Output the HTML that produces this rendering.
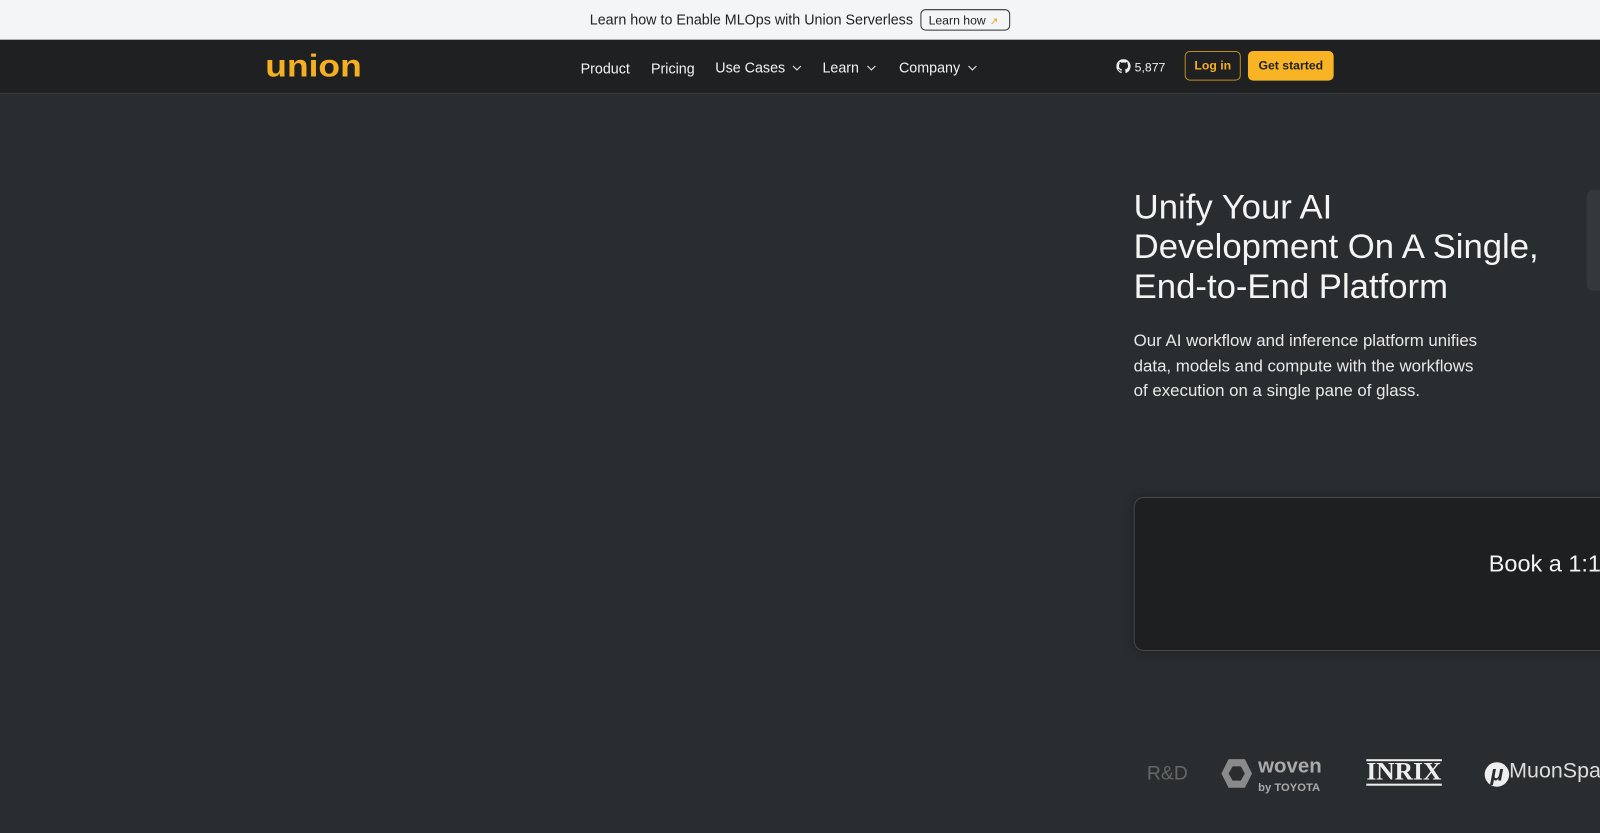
<!DOCTYPE html>
<html><head><meta charset="utf-8"><style>
*{margin:0;padding:0;box-sizing:border-box}
html,body{width:1600px;height:833px;overflow:hidden;background:#2a2d2f}
body{font-family:"Liberation Sans",sans-serif;position:relative}
#w{position:absolute;left:0;top:0;width:1568px;height:816px;transform:scale(1.0204);transform-origin:0 0}
.banner{position:absolute;left:0;top:0;width:1600px;height:39px;background:#f4f5f7;color:#222;font-size:14px}
.banner .t{position:absolute;left:578px;top:11px}
.banner .b{position:absolute;left:902px;top:9px;width:88px;height:21px;border:1px solid #333;border-radius:5px;font-size:12px;padding:3px 0 0 7px}
.banner .b span{color:#e5a50a;font-size:10px;margin-left:4px}
.nav{position:absolute;left:0;top:39px;width:1600px;height:53px;background:#1f2021;border-bottom:1px solid #3a3d40}
.logo{position:absolute;left:260px;top:8px;color:#f5b021;font-weight:bold;font-size:31px;letter-spacing:0;transform:scaleX(1.12);transform-origin:0 0}
.nav a{position:absolute;top:19px;color:#f2f2f2;font-size:14px}
.nav .ch{display:inline-block;width:6px;height:6px;border-right:1.5px solid #eee;border-bottom:1.5px solid #eee;transform:rotate(45deg);margin-left:9px;position:relative;top:-3px}
.gh{position:absolute;left:1094px;top:19px;color:#eee;font-size:12px}
.login{position:absolute;left:1161px;top:11px;width:55px;height:29px;border:1px solid #c28a20;border-radius:5px;color:#f5b021;font-size:12px;font-weight:bold;text-align:center;line-height:27px}
.gs{position:absolute;left:1223px;top:11px;width:84px;height:29px;background:#f8b425;border-radius:5px;color:#1f2021;font-size:12px;font-weight:bold;text-align:center;line-height:29px}
h1{position:absolute;left:1111px;top:184px;color:#f4f4f4;font-weight:normal;font-size:34px;line-height:39px;white-space:nowrap}
p.d{position:absolute;left:1111px;top:322px;color:#e8e8e8;font-size:16.5px;line-height:24.5px;width:348px}
.card{position:absolute;left:1111px;top:487px;width:520px;height:151px;background:#1e1f21;border:1px solid #45484b;border-radius:10px;box-shadow:0 0 10px rgba(0,0,0,.3)}
.card span{position:absolute;left:347px;top:51px;color:#f2f2f2;font-size:23px}
.side{position:absolute;left:1555px;top:186px;width:60px;height:99px;background:#34373b;border-radius:6px}
.logos{position:absolute;top:748px;color:#bbb;white-space:nowrap}
</style></head><body><div id="w">
<div class="banner"><span class="t">Learn how to Enable MLOps with Union Serverless</span><div class="b">Learn how<span>↗</span></div></div>
<div class="nav">
<div class="logo">union</div>
<a style="left:569px;top:20px">Product</a>
<a style="left:638px;top:20px">Pricing</a>
<a style="left:701px">Use Cases<i class="ch"></i></a>
<a style="left:806px">Learn<i class="ch"></i></a>
<a style="left:881px">Company<i class="ch"></i></a>
<div class="gh"><svg width="14" height="14" viewBox="0 0 16 16" style="vertical-align:-2px;margin-right:4px"><path fill="#eee" d="M8 0a8 8 0 0 0-2.5 15.6c.4 0 .5-.2.5-.4v-1.5c-2.200.5-2.7-1-2.7-1-.4-.9-.9-1.2-.9-1.2-.7-.5.1-.5.1-.5.8.1 1.2.8 1.2.8.7 1.3 1.9.9 2.4.7 0-.5.3-.9.5-1.1-1.8-.2-3.6-.9-3.6-4 0-.9.3-1.6.8-2.1-.1-.2-.4-1 .1-2.1 0 0 .7-.2 2.2.8a7.4 7.4 0 0 1 4 0c1.5-1 2.2-.8 2.2-.8.4 1.1.2 1.9.1 2.1.5.6.8 1.3.8 2.1 0 3.1-1.900 3.8-3.600 4 .3.3.6.8.6 1.5v2.2c0 .2.1.5.6.4A8 8 0 0 0 8 0z"/></svg>5,877</div>
<div class="login">Log in</div>
<div class="gs">Get started</div>
</div>
<h1>Unify Your AI<br>Development On A Single,<br>End-to-End Platform</h1>
<p class="d">Our AI workflow and inference platform unifies data, models and compute with the workflows of execution on a single pane of glass.</p>
<div class="card"><span>Book a 1:1</span></div>
<div class="side"></div>
<div class="logos" style="left:1124px;font-size:19px;color:#666">R&amp;D</div>
<svg style="position:absolute;left:1196px;top:743px" width="32" height="30" viewBox="0 0 32 30"><polygon points="8,1 24,1 31,15 24,29 8,29 1,15" fill="#8a8a8a"/><polygon points="12,8 20,8 24,15 20,22 12,22 8,15" fill="#2a2d2f"/></svg>
<div class="logos" style="left:1233px;top:742px;font-size:20px;font-weight:bold;color:#aaa;line-height:18px">woven<br><span style="font-size:11px">by TOYOTA</span></div>
<div class="logos" style="left:1339px;top:744px;font-family:'Liberation Serif',serif;font-weight:bold;font-size:25px;color:#eee;border-top:2px solid #eee;border-bottom:2px solid #eee;line-height:22px">INRIX</div>
<div class="logos" style="left:1455px;top:744px;font-size:21px;color:#ddd"><span style="display:inline-block;width:24px;height:24px;border-radius:50%;background:#eee;color:#2a2d2f;text-align:center;font-style:italic;font-weight:bold;line-height:24px;vertical-align:-3px">μ</span>MuonSpa</div>
</div></body></html>
